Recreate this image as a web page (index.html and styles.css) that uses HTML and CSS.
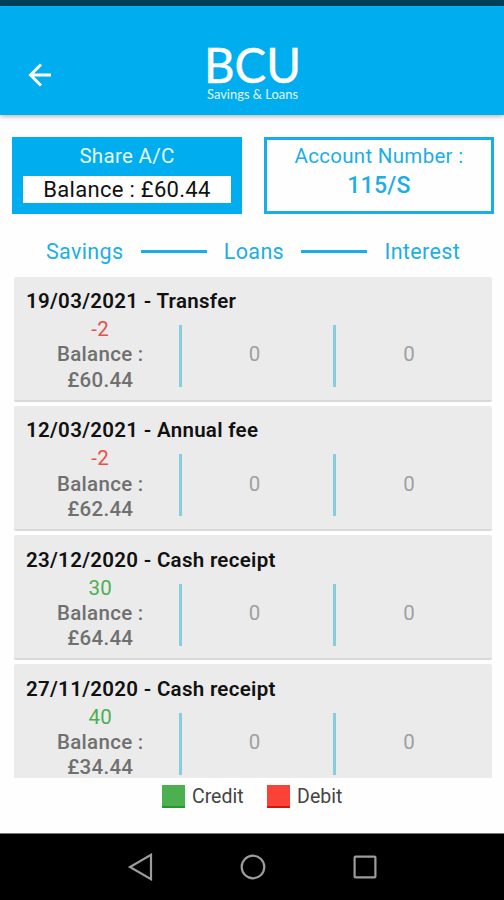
FILE: index.html
```html
<!DOCTYPE html>
<html lang="en">
<head>
    <meta charset="UTF-8">
    <meta name="viewport" content="width=device-width, initial-scale=1.0">
    <title>BCU Savings &amp; Loans</title>
    <link rel="stylesheet" href="styles.css">
</head>
<body>
    <div class="status-bar"></div>
    <header class="header">
        <svg class="back" viewBox="0 0 24 24"><path d="M23 12H3M13 1.5L2.5 12L13 22.5"/></svg>
        <svg class="logo" viewBox="0 0 100 74">
            <text class="logo-name" x="1" y="50" textLength="97" lengthAdjust="spacingAndGlyphs">BCU</text>
            <text class="logo-tag" x="4" y="65.5" textLength="91" lengthAdjust="spacingAndGlyphs">Savings &amp; Loans</text>
        </svg>
    </header>
    <main class="content">
        <div class="accounts">
            <div class="account share">
                <div>Share A/C</div>
                <div class="share-balance">Balance : £60.44</div>
            </div>
            <div class="account number">
                <div>Account Number :</div>
                <div class="number-value">115/S</div>
            </div>
        </div>
        <div class="columns">
            <span>Savings</span><i></i><span>Loans</span><i></i><span>Interest</span>
        </div>
        <div class="list">
            <div class="item">
                <h2>19/03/2021 - Transfer</h2>
                <div class="row">
                    <div class="cell"><span class="debit">-2</span><b>Balance :</b><b>£60.44</b></div>
                    <div class="cell zero">0</div>
                    <div class="cell zero">0</div>
                </div>
            </div>
            <div class="item">
                <h2>12/03/2021 - Annual fee</h2>
                <div class="row">
                    <div class="cell"><span class="debit">-2</span><b>Balance :</b><b>£62.44</b></div>
                    <div class="cell zero">0</div>
                    <div class="cell zero">0</div>
                </div>
            </div>
            <div class="item">
                <h2>23/12/2020 - Cash receipt</h2>
                <div class="row">
                    <div class="cell"><span class="credit">30</span><b>Balance :</b><b>£64.44</b></div>
                    <div class="cell zero">0</div>
                    <div class="cell zero">0</div>
                </div>
            </div>
            <div class="item">
                <h2>27/11/2020 - Cash receipt</h2>
                <div class="row">
                    <div class="cell"><span class="credit">40</span><b>Balance :</b><b>£34.44</b></div>
                    <div class="cell zero">0</div>
                    <div class="cell zero">0</div>
                </div>
            </div>
        </div>
        <div class="legend">
            <span class="box"></span><span class="legend-credit">Credit</span>
            <span class="box red"></span><span>Debit</span>
        </div>
    </main>
    <nav class="nav-bar">
        <svg viewBox="0 0 28 28"><path d="M24 1.8V26.2L3 14Z"/></svg>
        <svg viewBox="0 0 28 28"><circle cx="14" cy="14" r="11.3"/></svg>
        <svg viewBox="0 0 28 28"><rect x="3.6" y="3.6" width="20.8" height="20.8" rx="1"/></svg>
    </nav>
</body>
</html>
```

FILE: styles.css
```css
* {
    box-sizing: border-box;
}
body {
    margin: 0;
    width: 504px;
    height: 900px;
    overflow: hidden;
    display: flex;
    flex-direction: column;
    background-color: #fefefe;
    font-family: Roboto, sans-serif;
    font-size: 20.5px;
    letter-spacing: 0.3px;
}
.status-bar {
    height: 5.5px;
    background-color: #00425a;
}
.header {
    height: 109.5px;
    flex: none;
    display: flex;
    align-items: flex-start;
    background-color: #00aeef;
    box-shadow: 0 1px 5px rgba(0, 0, 0, 0.35);
}
.back {
    width: 24px;
    height: 24px;
    margin: 57.5px 0 0 28px;
    fill: none;
    stroke: #fff;
    stroke-width: 2.9;
}
.logo {
    width: 100px;
    height: 74px;
    margin: 27.5px 0 0 151px;
    fill: #fff;
    letter-spacing: 0;
}
.logo-name {
    font-family: Lato, sans-serif;
    font-size: 48px;
    stroke: #fff;
    stroke-width: 0.5;
}
.logo-tag {
    font-family: Lato, sans-serif;
    font-size: 13px;
    fill: #e2f6ff;
}
.content {
    height: 717.5px;
    flex: none;
    padding: 22px 10px 0 12px;
}
.accounts {
    display: flex;
    justify-content: space-between;
}
.account {
    width: 230px;
    height: 77px;
    text-align: center;
    line-height: 24px;
    border: 3px solid #18aee8;
    padding-top: 4px;
    color: #1caee4;
}
.share {
    padding: 4px 8px 0;
    border-color: #00aeef;
    background-color: #00aeef;
    color: #e6f8ff;
}
.share-balance {
    height: 27px;
    margin-top: 8px;
    line-height: 27px;
    font-size: 22px;
    background-color: #fff;
    color: #111;
}
.number-value {
    margin-top: 6px;
    font-size: 23px;
    font-weight: 500;
}
.columns {
    height: 62.5px;
    display: flex;
    align-items: center;
    padding: 13px 0 0 34px;
    font-size: 21.5px;
    letter-spacing: 0.35px;
    line-height: 24px;
    color: #1caee4;
}
.columns i {
    width: 66px;
    height: 3px;
    margin: 0 17.2px;
    background-color: #18aee8;
}
.list {
    height: 501px;
    overflow: hidden;
    padding: 0 2px;
}
.item {
    height: 125.3px;
    margin-bottom: 4px;
    padding: 12.5px 12px 0;
    background-color: #ebebeb;
    border-bottom: 2px solid #d8d8d8;
    border-radius: 2px;
}
.item h2 {
    margin: 0;
    font-size: 20.5px;
    line-height: 24px;
    font-weight: 600;
    color: #111;
}
.row {
    display: flex;
    align-items: center;
    margin: 0 -3px;
}
.cell {
    position: relative;
    flex: none;
    width: 154.5px;
    height: 80px;
    padding-top: 4.2px;
    display: flex;
    flex-direction: column;
    align-items: center;
    line-height: 25.2px;
}
.cell b {
    font-weight: 500;
    color: #707070;
}
.cell + .cell::before {
    content: "";
    position: absolute;
    left: 1px;
    top: 12px;
    width: 3px;
    height: 62px;
    background-color: #87cddd;
}
.zero {
    padding-top: 29.3px;
    color: #a0a0a0;
}
.debit {
    color: #e5514c;
}
.credit {
    color: #4caf50;
}
.legend {
    display: flex;
    align-items: center;
    padding: 7px 0 0 150px;
    font-size: 19.5px;
    letter-spacing: 0;
    line-height: 23px;
    color: #444;
}
.box {
    width: 23px;
    height: 23px;
    margin-right: 7px;
    border-bottom: 2px solid #219a2c;
    background-color: #4caf50;
}
.red {
    border-bottom-color: #d9130d;
    background-color: #fb4237;
}
.legend-credit {
    margin-right: 23.5px;
}
.nav-bar {
    flex: 1;
    display: flex;
    gap: 84px;
    padding: 19px 0 0 127px;
    background-color: #000;
    border-top: 1px solid #777;
}
.nav-bar svg {
    width: 28px;
    height: 28px;
    fill: none;
    stroke: #9c9c9c;
    stroke-width: 2.2;
}
```
